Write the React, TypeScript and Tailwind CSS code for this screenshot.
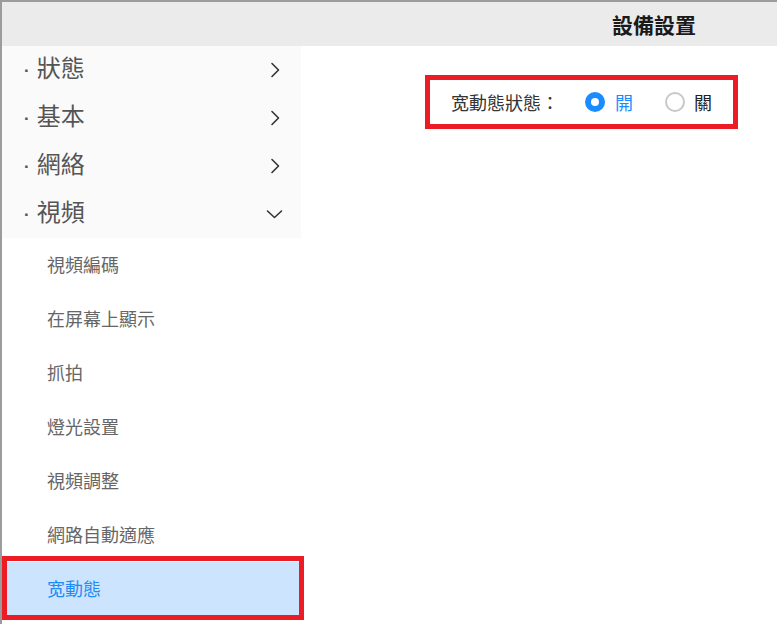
import React from "react";

const font = { fontFamily: '"Noto Sans CJK TC", "Noto Sans", sans-serif' };

function ChevronRight() {
  return (
    <svg width="10" height="16" viewBox="0 0 10 16" fill="none">
      <path d="M2 1.5 L8.5 8 L2 14.5" stroke="#333" strokeWidth="1.6" strokeLinecap="round" strokeLinejoin="round" />
    </svg>
  );
}

function ChevronDown() {
  return (
    <svg width="17" height="10" viewBox="0 0 17 10" fill="none">
      <path d="M1.5 2 L8.5 8.5 L15.5 2" stroke="#333" strokeWidth="1.6" strokeLinecap="round" strokeLinejoin="round" />
    </svg>
  );
}

const groups = [
  { name: "狀態", open: false },
  { name: "基本", open: false },
  { name: "網絡", open: false },
  { name: "視頻", open: true },
];

const subs = ["視頻編碼", "在屏幕上顯示", "抓拍", "燈光設置", "視頻調整", "網路自動適應", "宽動態"];

export default function App() {
  return (
    <div className="relative w-[777px] h-[624px] overflow-hidden bg-white border-t-2 border-l-2 border-[#9c9c9c]" style={font}>
      <div className="absolute top-[-2px] left-[148px] w-[14px] h-[2px] bg-[#3f9a4a]" />
      <div className="absolute top-[-2px] left-[192px] w-[1px] h-[2px] bg-[#555]" />
      <header className="h-[44px] bg-[#ebebeb] flex items-center pl-[610px]">
        <span className="text-[21px] font-bold text-[#1a1a1a] leading-none">設備設置</span>
      </header>
      <div className="flex">
        <aside className="w-[299px] shrink-0">
          <div className="bg-[#fafafa]">
            {groups.map((g) => (
              <div key={g.name} className="h-[48px] flex items-center justify-between pl-[22px] pr-[21px]">
                <span className="text-[24px] text-[#555] leading-none -mt-[6px] flex items-center">
                  <span className="text-[17px] mr-[7px] mt-[6px] font-['Liberation_Sans',sans-serif] font-bold">·</span>
                  {g.name}
                </span>
                {g.open ? (
                  <span className="mr-[-3px]"><ChevronDown /></span>
                ) : (
                  <ChevronRight />
                )}
              </div>
            ))}
          </div>
          <div>
            {subs.map((s, i) => {
              const active = i === subs.length - 1;
              return (
                <div
                  key={s}
                  className={
                    active
                      ? "relative h-[54px] flex items-center pl-[45px] bg-[#cce4fd] text-[#1e8cf8]"
                      : "h-[54px] flex items-center pl-[45px] text-[#666]"
                  }
                >
                  <span className="text-[18px] leading-none -mt-[3px]">{s}</span>
                  {active && (
                    <div className="absolute left-0 right-[-3px] top-[-6px] bottom-[-4px] border-[5px] border-[#ec1c24]" />
                  )}
                </div>
              );
            })}
          </div>
        </aside>
        <main className="flex-1 pl-[124px] pt-[29px]">
          <div className="w-[313px] h-[54px] border-[5px] border-[#ec1c24] flex items-center pl-[21px]">
            <span className="text-[18px] text-[#333] leading-none">宽動態狀態：</span>
            <label className="flex items-center ml-[26px]">
              <span className="w-[20px] h-[20px] rounded-full bg-[#1a8cff] flex items-center justify-center">
                <span className="w-[8px] h-[8px] rounded-full bg-white" />
              </span>
              <span className="ml-[10px] text-[18px] text-[#1a8cff] leading-none">開</span>
            </label>
            <label className="flex items-center ml-[32px]">
              <span className="w-[20px] h-[20px] rounded-full border-2 border-[#c8c8c8] bg-white" />
              <span className="ml-[9px] text-[18px] text-[#222] leading-none">關</span>
            </label>
          </div>
        </main>
      </div>
    </div>
  );
}
